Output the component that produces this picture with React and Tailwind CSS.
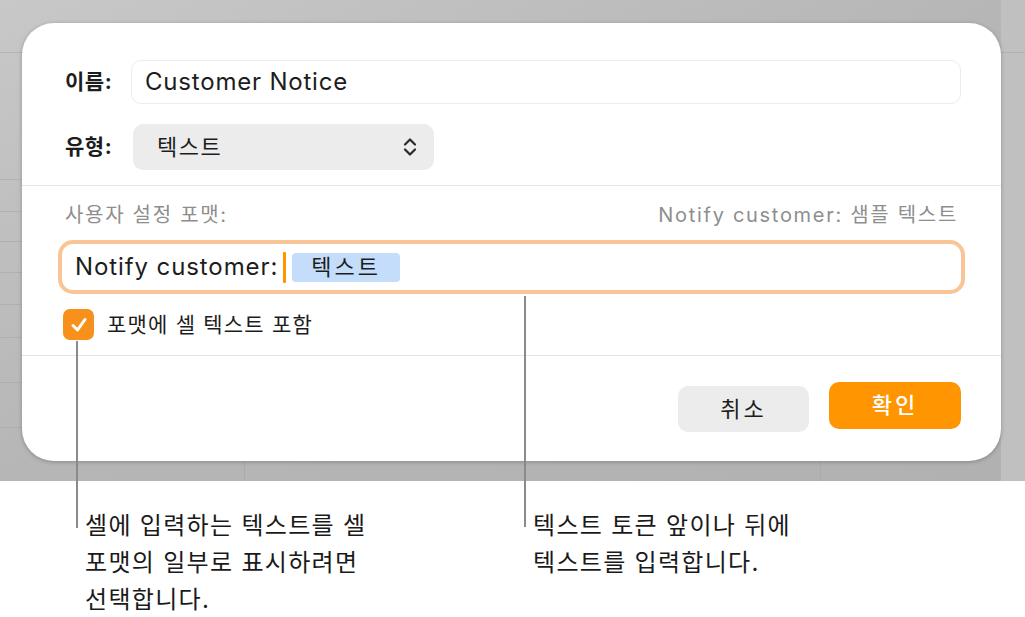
export default function App() {
  const rows = [53, 127, 32, 30, 31, 32, 33, 45, 45];
  return (
    <div className="relative w-[1025px] h-[617px] bg-white overflow-hidden font-['Inter','Noto_Sans_CJK_KR',sans-serif] text-[#1d1d1d]">
      {/* background spreadsheet */}
      <div className="h-[481px] flex bg-gradient-to-br from-[#c8c8c8] via-[#b6b6b6] to-[#b1b1b1]">
        <div className="flex-1 flex flex-col">
          {rows.map((h, i) => (
            <div key={i} style={{ height: h }} className="border-b border-[#a9a9a9]/60 shrink-0" />
          ))}
          <div className="flex-1 flex">
            <div className="w-[245px] border-r border-[#a6a6a6]/70" />
            <div className="w-[576px] border-r border-[#a6a6a6]/70" />
            <div className="flex-1" />
          </div>
        </div>
        <div className="w-[24px] bg-[#c0c0c0] flex flex-col">
          <div className="h-[53px] border-b border-[#a9a9a9]/60" />
        </div>
      </div>

      {/* callout texts */}
      <div className="flex pt-[26px] text-[24px] leading-[37px] tracking-[1.3px] text-[#1a1a1a]">
        <div className="pl-[85px] w-[533px]">
          <div>셀에 입력하는 텍스트를 셀</div>
          <div>포맷의 일부로 표시하려면</div>
          <div>선택합니다.</div>
        </div>
        <div>
          <div>텍스트 토큰 앞이나 뒤에</div>
          <div>텍스트를 입력합니다.</div>
        </div>
      </div>

      {/* dialog */}
      <div className="absolute left-[22px] top-[23px] w-[979px] h-[438px] rounded-[32px] bg-white shadow-[0_1px_4px_rgba(0,0,0,0.25)]">
        <div className="pt-[37px]">
          <div className="flex items-center h-[44px] pl-[43px] pr-[40px]">
            <div className="w-[66px] text-[21px] tracking-[0.5px] font-bold">이름:</div>
            <div className="flex-1 h-full rounded-[10px] border border-[#ececec] flex items-center pl-[13px] text-[24px] tracking-[0.8px]">
              Customer Notice
            </div>
          </div>
          <div className="flex items-center h-[46px] mt-[20px] pl-[43px]">
            <div className="w-[68px] text-[21px] tracking-[0.5px] font-bold">유형:</div>
            <div className="w-[301px] h-full rounded-[10px] bg-[#ececec] flex items-center justify-between pl-[24px] pr-[16px] text-[22px] tracking-[1.5px]">
              <span>텍스트</span>
              <svg width="16" height="20" viewBox="0 0 16 20" fill="none" stroke="#2a2a2a" strokeWidth="2.2" strokeLinecap="round" strokeLinejoin="round">
                <path d="M3 7.5 L8 2.5 L13 7.5" />
                <path d="M3 12.5 L8 17.5 L13 12.5" />
              </svg>
            </div>
          </div>
          <div className="mt-[15px] h-px bg-[#e3e3e3]" />
          <div className="flex justify-between items-center px-[43px] mt-[17px] h-[24px] text-[20px] tracking-[1.7px] text-[#8e8e8e]">
            <span>사용자 설정 포맷:</span>
            <span>Notify customer: 샘플 텍스트</span>
          </div>
          <div className="mx-[36px] mt-[13px] rounded-[15px] bg-[#f9c597] p-[4px]">
            <div className="h-[46px] rounded-[11px] bg-white flex items-center pl-[13px]">
              <span className="text-[24px] tracking-[0.9px]">Notify customer:</span>
              <div className="ml-[5px] w-[3px] h-[31px] rounded-[1px] bg-[#ff9500]" />
              <div className="ml-[6px] w-[108px] h-[29px] rounded-[4px] bg-[#c3ddfb] flex items-center justify-center text-[22px] tracking-[3px]">
                텍스트
              </div>
            </div>
          </div>
          <div className="flex items-center mt-[15px] h-[31px] pl-[41px]">
            <div className="w-[31px] h-[31px] rounded-[7px] bg-[#f7911b] flex items-center justify-center">
              <svg width="20" height="20" viewBox="0 0 20 20" fill="none" stroke="white" strokeWidth="3" strokeLinecap="round" strokeLinejoin="round">
                <path d="M4 10.5 L8.5 15 L16 4.5" />
              </svg>
            </div>
            <span className="ml-[13px] text-[21px] tracking-[1.2px]">포맷에 셀 텍스트 포함</span>
          </div>
          <div className="mt-[15px] h-px bg-[#e3e3e3]" />
          <div className="flex justify-end items-start gap-[20px] pr-[40px] mt-[26px]">
            <button className="mt-[4px] w-[131px] h-[46px] rounded-[10px] bg-[#ececec] text-[22px] tracking-[3px] text-[#1d1d1d]">
              취소
            </button>
            <button className="w-[132px] h-[47px] rounded-[10px] bg-[#ff9500] text-[22px] tracking-[3px] font-medium text-white">
              확인
            </button>
          </div>
        </div>
      </div>

      {/* callout lines */}
      <div className="absolute left-[76px] top-[341px] w-[2px] h-[187px] bg-[#8a8a8a]" />
      <div className="absolute left-[524px] top-[296px] w-[2px] h-[231px] bg-[#8a8a8a]" />
    </div>
  );
}
